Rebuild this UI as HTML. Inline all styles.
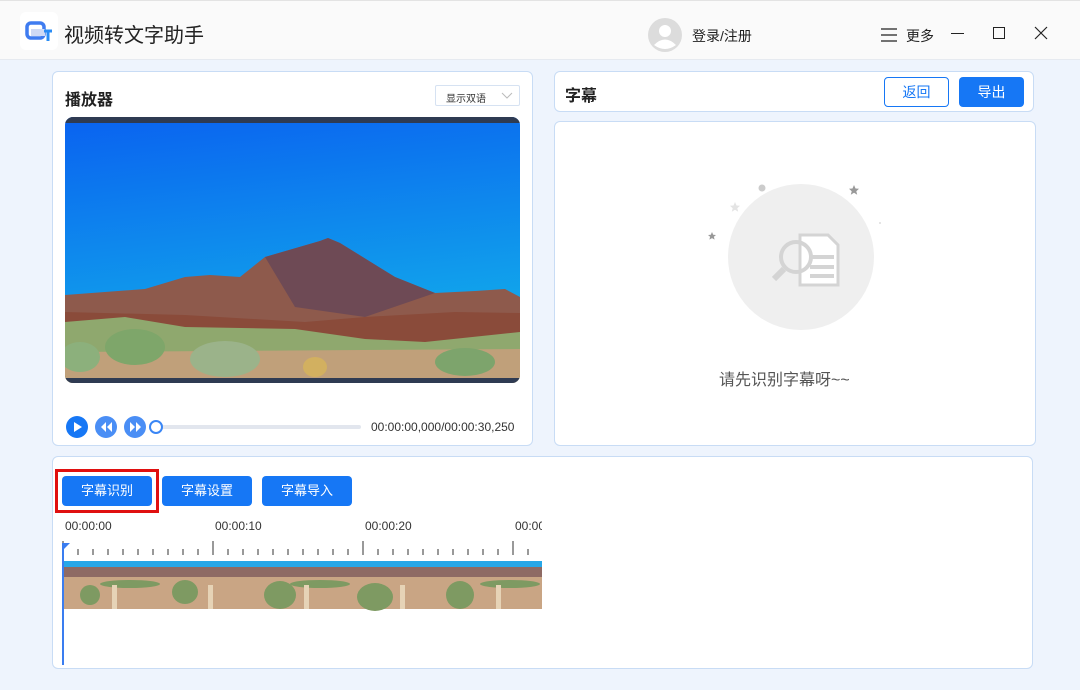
<!DOCTYPE html>
<html><head><meta charset="utf-8"><style>
*{margin:0;padding:0;box-sizing:border-box}
body{width:1080px;height:690px;overflow:hidden;background:#eef4fd;font-family:"Liberation Sans","Noto Sans CJK SC",sans-serif;position:relative;color:#222}
.abs{position:absolute}
.top{left:0;top:0;width:1080px;height:60px;background:#fafafa;border-bottom:1px solid #e6eaf0;border-top:1px solid #e3e3e3}
.panel{position:absolute;background:#fff;border:1px solid #c8dcf5;border-radius:6px}
.btn{position:absolute;background:#1677f5;color:#fff;font-size:13px;text-align:center;border-radius:4px}
.tl{position:absolute;font-size:12px;color:#333;top:519px}
</style></head><body>
<div class="abs top"></div>
<div class="abs" style="left:20px;top:12px;width:38px;height:38px;background:#fff;border-radius:6px"></div>
<svg class="abs" style="left:25px;top:20px" width="30" height="24" viewBox="0 0 30 24"><rect x="2" y="3" width="17" height="15" rx="4" fill="none" stroke="#3f7cf0" stroke-width="3.5"/><rect x="6" y="9" width="14" height="7" fill="#cfdaf5"/><path d="M19 11h8M23 11v10" stroke="#2a8cf5" stroke-width="3"/></svg>
<div class="abs" style="left:64px;top:19px;font-size:20px;color:#222">视频转文字助手</div>
<svg class="abs" style="left:648px;top:18px" width="34" height="34" viewBox="0 0 34 34"><circle cx="17" cy="17" r="17" fill="#dcdcdc"/><circle cx="17" cy="13" r="6" fill="#fff"/><path d="M6 27q11-11 22 0q-11 8-22 0z" fill="#fff"/></svg>
<div class="abs" style="left:692px;top:26px;font-size:14px">登录/注册</div>
<svg class="abs" style="left:881px;top:28px" width="16" height="14"><path d="M0 1h16M0 7h16M0 13h16" stroke="#222" stroke-width="1.2"/></svg>
<div class="abs" style="left:906px;top:26px;font-size:14px">更多</div>
<div class="abs" style="left:951px;top:33px;width:13px;height:1px;background:#222"></div>
<div class="abs" style="left:993px;top:27px;width:12px;height:12px;border:1.3px solid #222"></div>
<svg class="abs" style="left:1034px;top:26px" width="14" height="14"><path d="M1 1l12 12M13 1L1 13" stroke="#222" stroke-width="1.2"/></svg>

<div class="panel" style="left:52px;top:71px;width:481px;height:375px"></div>
<div class="abs" style="left:65px;top:86px;font-size:16px;font-weight:bold">播放器</div>
<div class="abs" style="left:435px;top:85px;width:85px;height:21px;border:1px solid #d6e2f2;border-radius:2px;font-size:10px;padding:4px 0 0 10px;color:#333">显示双语<svg style="position:absolute;right:6px;top:6px" width="12" height="8"><path d="M1 1l5 5 5-5" stroke="#bbb" fill="none"/></svg></div>
<svg class="abs" style="left:65px;top:117px" width="455" height="266" viewBox="0 0 455 266">
<defs><linearGradient id="sky" x1="0" y1="0" x2="0.2" y2="1"><stop offset="0" stop-color="#0a62f0"/><stop offset="1" stop-color="#12b0ea"/></linearGradient>
<clipPath id="c"><rect width="455" height="266" rx="8"/></clipPath></defs>
<g clip-path="url(#c)">
<rect width="455" height="266" fill="url(#sky)"/>
<path d="M0 178L80 172L120 160L145 158L175 160L200 140L255 124L263 121L275 126L330 160L370 176L410 174L440 172L455 180V266H0Z" fill="#8e5a4c"/>
<path d="M200 140L255 124L263 121L275 126L330 160L370 176L300 200L230 190Z" fill="#6e4a55"/>
<path d="M0 195L120 198L240 205L300 200L390 195L455 196V266H0Z" fill="#8a4b3a"/>
<path d="M0 205L60 200L120 210L230 212L300 222L360 225L455 215V266H0Z" fill="#8fa86e"/>
<path d="M0 235L455 232V266H0Z" fill="#c0a07a"/>
<ellipse cx="70" cy="230" rx="30" ry="18" fill="#7ea66a"/><ellipse cx="160" cy="242" rx="35" ry="18" fill="#9bb38a"/><ellipse cx="250" cy="250" rx="12" ry="10" fill="#d2b060"/><ellipse cx="400" cy="245" rx="30" ry="14" fill="#7da46c"/><ellipse cx="15" cy="240" rx="20" ry="15" fill="#8cb07c"/>
<rect width="455" height="6" fill="#2f3b52"/><rect y="261" width="455" height="5" fill="#2f3b52"/>
</g></svg>
<svg class="abs" style="left:66px;top:416px" width="96" height="22"><circle cx="11" cy="11" r="11" fill="#1677f5"/><path d="M8 6l8 5-8 5z" fill="#fff"/><circle cx="40" cy="11" r="11" fill="#4a8ef5"/><path d="M40 6l-5 5 5 5zM46 6l-5 5 5 5z" fill="#fff"/><circle cx="69" cy="11" r="11" fill="#4a8ef5"/><path d="M64 6l5 5-5 5zM70 6l5 5-5 5z" fill="#fff"/></svg>
<div class="abs" style="left:156px;top:425px;width:205px;height:4px;background:#e2e6ee;border-radius:2px"></div>
<div class="abs" style="left:149px;top:420px;width:14px;height:14px;border:2px solid #3a86f5;border-radius:50%;background:#fff"></div>
<div class="abs" style="left:371px;top:420px;font-size:12px;color:#333">00:00:00,000/00:00:30,250</div>

<div class="panel" style="left:554px;top:71px;width:480px;height:41px"></div>
<div class="abs" style="left:565px;top:82px;font-size:16px;font-weight:bold">字幕</div>
<div class="abs" style="left:884px;top:77px;width:65px;height:30px;border:1px solid #1677f5;border-radius:4px;color:#1677f5;font-size:14px;text-align:center;line-height:28px">返回</div>
<div class="btn" style="left:959px;top:77px;width:65px;height:30px;font-size:14px;line-height:30px">导出</div>
<div class="panel" style="left:554px;top:121px;width:482px;height:325px"></div>
<svg class="abs" style="left:700px;top:175px" width="190" height="160" viewBox="0 0 190 160">
<circle cx="101" cy="82" r="73" fill="#efefef"/>
<circle cx="62" cy="13" r="3.5" fill="#ccc"/>
<path d="M154 10l1.5 3.5 3.5.3-2.7 2.4.9 3.6-3.2-2-3.2 2 .9-3.6-2.7-2.4 3.5-.3z" fill="#999"/>
<path d="M35 27l1.5 3.5 3.5.3-2.7 2.4.9 3.6-3.2-2-3.2 2 .9-3.6-2.7-2.4 3.5-.3z" fill="#e4e4e4"/>
<path d="M12 57l1.2 2.7 2.8.3-2.1 1.8.7 2.8-2.6-1.5-2.6 1.5.7-2.8-2.1-1.8 2.8-.3z" fill="#999"/>
<circle cx="180" cy="48" r="1" fill="#ddd"/>
<path d="M100 60h28l10 10v40h-38z" fill="#fff" stroke="#d4d4d4" stroke-width="3"/>
<path d="M110 82h24M110 92h24M110 101h24" stroke="#d4d4d4" stroke-width="4"/>
<circle cx="96" cy="82" r="15" fill="none" stroke="#d4d4d4" stroke-width="4"/>
<path d="M84 94l-10 10" stroke="#d4d4d4" stroke-width="6"/>
</svg>
<div class="abs" style="left:719px;top:366px;font-size:16px;color:#555">请先识别字幕呀~~</div>

<div class="panel" style="left:52px;top:456px;width:981px;height:213px"></div>
<div class="abs" style="left:55px;top:469px;width:104px;height:44px;border:3px solid #e01010"></div>
<div class="btn" style="left:62px;top:476px;width:90px;height:30px;line-height:30px">字幕识别</div>
<div class="btn" style="left:162px;top:476px;width:90px;height:30px;line-height:30px">字幕设置</div>
<div class="btn" style="left:262px;top:476px;width:90px;height:30px;line-height:30px">字幕导入</div>
<div class="tl" style="left:65px">00:00:00</div><div class="tl" style="left:215px">00:00:10</div><div class="tl" style="left:365px">00:00:20</div>
<div class="tl" style="left:515px;width:27px;overflow:hidden;white-space:nowrap">00:00:30</div>
<svg class="abs" style="left:60px;top:540px" width="485" height="125">
<g stroke="#333" stroke-width="1">
<path d="M3 1v14M153 1v14M303 1v14M453 1v14"/>
<path d="M18 9v6M33 9v6M48 9v6M63 9v6M78 9v6M93 9v6M108 9v6M123 9v6M138 9v6M168 9v6M183 9v6M198 9v6M213 9v6M228 9v6M243 9v6M258 9v6M273 9v6M288 9v6M318 9v6M333 9v6M348 9v6M363 9v6M378 9v6M393 9v6M408 9v6M423 9v6M438 9v6M468 9v6"/>
</g>
<g>
<rect x="3" y="21" width="479" height="48" fill="#c9a584"/>
<rect x="3" y="21" width="479" height="6" fill="#27a7e8"/>
<path d="M3 27h479v10H3z" fill="#8e6a64"/>
<g fill="#7e9a62"><ellipse cx="30" cy="55" rx="10" ry="10"/><ellipse cx="125" cy="52" rx="13" ry="12"/><ellipse cx="220" cy="55" rx="16" ry="14"/><ellipse cx="315" cy="57" rx="18" ry="14"/><ellipse cx="400" cy="55" rx="14" ry="14"/><ellipse cx="70" cy="44" rx="30" ry="4"/><ellipse cx="260" cy="44" rx="30" ry="4"/><ellipse cx="450" cy="44" rx="30" ry="4"/></g>
<g fill="#e6d3b6"><rect x="52" y="45" width="5" height="24"/><rect x="148" y="45" width="5" height="24"/><rect x="244" y="45" width="5" height="24"/><rect x="340" y="45" width="5" height="24"/><rect x="436" y="45" width="5" height="24"/></g>
</g>
<rect x="2" y="3" width="2" height="122" fill="#3a7df0"/>
<path d="M3 3h7l-7 7z" fill="#3a7df0"/>
</svg>
</body></html>
